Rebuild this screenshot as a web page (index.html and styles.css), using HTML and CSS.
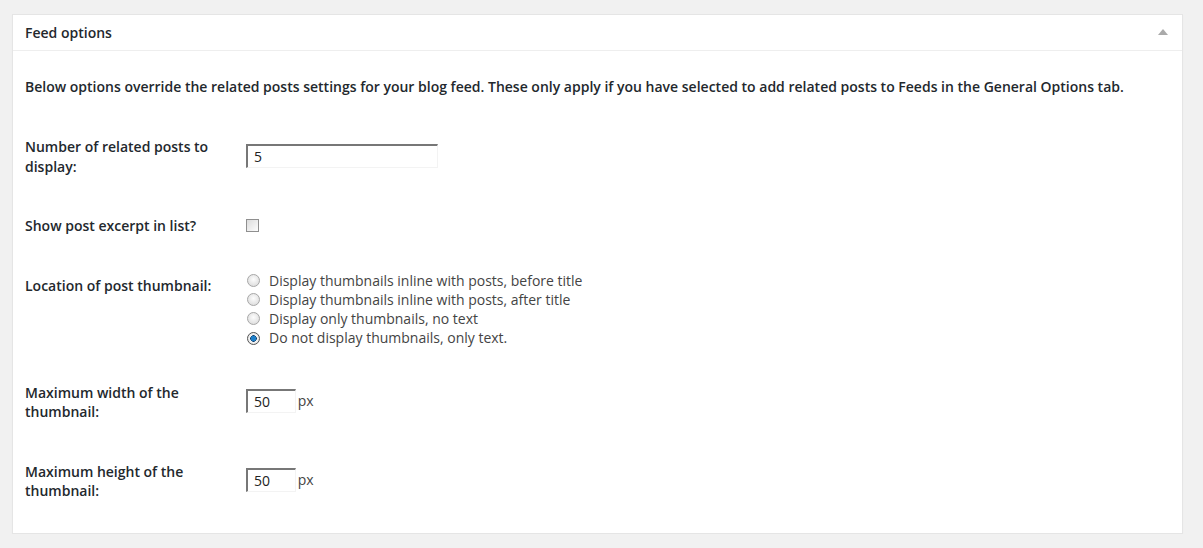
FILE: index.html
```html
<!DOCTYPE html>
<html lang="en">
<head>
  <meta charset="UTF-8" />
  <title>Feed options</title>
  <link rel="stylesheet" href="styles.css">
</head>
<body>
  <div class="postbox">
    <div class="postbox-header">
      <h3 class="hndle">Feed options</h3>
      <span class="toggle-indicator"></span>
    </div>
    <div class="inside">
      <p class="description">Below options override the related posts settings for your blog feed. These only apply if you have selected to add related posts to Feeds in the General Options tab.</p>

      <table class="form-table">
        <tr>
          <th><label for="limit_feed">Number of related posts to display:</label></th>
          <td><input type="text" id="limit_feed" class="text-wide" value="5"></td>
        </tr>
        <tr>
          <th><label for="show_excerpt_feed">Show post excerpt in list?</label></th>
          <td><input type="checkbox" id="show_excerpt_feed" class="check"></td>
        </tr>
        <tr>
          <th>Location of post thumbnail:</th>
          <td>
            <label class="radio-row"><input type="radio" name="thumb" class="radio"> Display thumbnails inline with posts, before title</label>
            <label class="radio-row"><input type="radio" name="thumb" class="radio"> Display thumbnails inline with posts, after title</label>
            <label class="radio-row"><input type="radio" name="thumb" class="radio"> Display only thumbnails, no text</label>
            <label class="radio-row"><input type="radio" name="thumb" class="radio" checked> Do not display thumbnails, only text.</label>
          </td>
        </tr>
        <tr>
          <th><label for="thumb_width">Maximum width of the thumbnail:</label></th>
          <td><input type="text" id="thumb_width" class="text-small" value="50"> <span class="unit">px</span></td>
        </tr>
        <tr>
          <th><label for="thumb_height">Maximum height of the thumbnail:</label></th>
          <td><input type="text" id="thumb_height" class="text-small" value="50"> <span class="unit">px</span></td>
        </tr>
      </table>
    </div>
  </div>
</body>
</html>
```

FILE: styles.css
```css
html, body {
  margin: 0;
  padding: 0;
  background: #f1f1f1;
  font-family: "Open Sans", sans-serif;
  color: #222;
}

body {
  padding: 14px 20px 0 12px;
}

.postbox {
  background: #fff;
  border: 1px solid #e5e5e5;
  box-shadow: 0 1px 1px rgba(0,0,0,0.04);
}

.postbox-header {
  display: flex;
  align-items: center;
  justify-content: space-between;
  height: 35px;
  border-bottom: 1px solid #eee;
  padding: 0 14px 0 12px;
}

.hndle {
  margin: 0;
  font-size: 14px;
  font-weight: 600;
  color: #23282d;
}

.toggle-indicator {
  width: 0;
  height: 0;
  border-left: 5px solid transparent;
  border-right: 5px solid transparent;
  border-bottom: 6px solid #aaa;
  margin-top: -2px;
}

.inside {
  padding: 0 12px 12px 12px;
}

.description {
  margin: 26px 0 20px;
  font-size: 14px;
  font-weight: 600;
  line-height: 20px;
  color: #23282d;
}

.form-table {
  border-collapse: collapse;
  font-size: 14px;
  line-height: 19.5px;
}

.form-table th {
  width: 200px;
  padding: 20px 21px 20px 0;
  text-align: left;
  vertical-align: top;
  font-weight: 600;
  color: #23282d;
}

.form-table td {
  padding: 15px 0;
  vertical-align: middle;
  color: #444;
}

.text-wide,
.text-small {
  box-sizing: border-box;
  height: 24px;
  margin: 0;
  padding: 0 6px;
  font-family: "Open Sans", sans-serif;
  font-size: 14px;
  color: #222;
  border-style: solid;
  border-width: 2px 1px 1px 2px;
  border-color: #777 #f3f3f3 #f3f3f3 #777;
  background: #fff;
  outline: none;
  vertical-align: middle;
}

.text-wide {
  display: block;
  width: 192px;
  margin-top: -2px;
}

.text-small {
  width: 50px;
  margin-top: -2px;
}

.unit {
  margin-left: -2px;
}

.check,
.radio {
  appearance: none;
  -webkit-appearance: none;
  width: 13px;
  height: 13px;
  margin: 0;
  border: 1px solid #8f8f8f;
  background: linear-gradient(135deg, #dcdcdc, #fdfdfd);
  vertical-align: middle;
}

.check {
  display: block;
}

.radio-row {
  display: flex;
  align-items: center;
  gap: 9px;
  padding-left: 1px;
  line-height: 19.3px;
}

.radio {
  border-radius: 50%;
  border-color: #a8a8a8;
  background: radial-gradient(circle at 50% 40%, #fdfdfd, #d6d6d6);
}

.radio:checked {
  border-color: #555;
  background: radial-gradient(circle, #1d7fc9 0 2.5px, #0d3f6e 3px, #f4f4f4 3.5px, #dadada);
}
```
